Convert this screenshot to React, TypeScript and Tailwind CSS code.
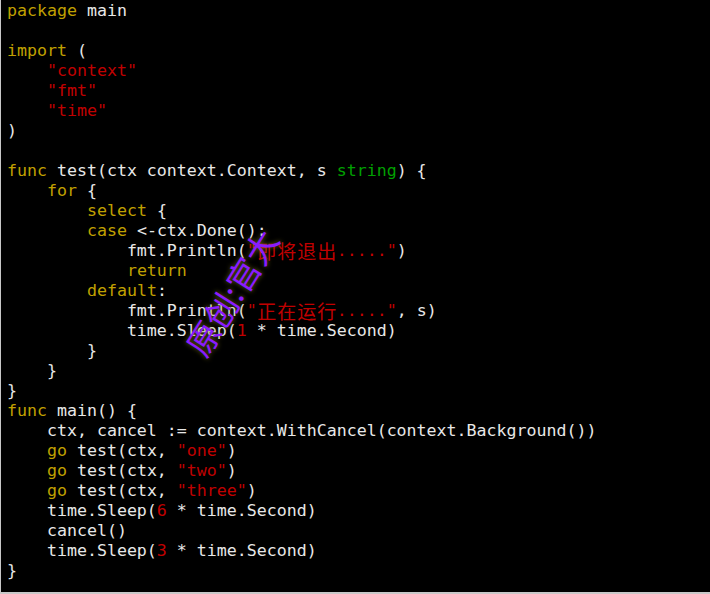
import React from "react";

type Seg = [string, string];

const K = "text-[#c0a000]";
const S = "text-[#c00000]";
const T = "text-[#00a000]";
const D = "text-[#e8e8e8]";

const lines: Seg[][] = [
  [[K, "package"], [D, " main"]],
  [],
  [[K, "import"], [D, " ("]],
  [[D, "    "], [S, '"context"']],
  [[D, "    "], [S, '"fmt"']],
  [[D, "    "], [S, '"time"']],
  [[D, ")"]],
  [],
  [[K, "func"], [D, " test(ctx context.Context, s "], [T, "string"], [D, ") {"]],
  [[D, "    "], [K, "for"], [D, " {"]],
  [[D, "        "], [K, "select"], [D, " {"]],
  [[D, "        "], [K, "case"], [D, " <-ctx.Done():"]],
  [[D, "            fmt.Println("], [S, '"即将退出....."'], [D, ")"]],
  [[D, "            "], [K, "return"]],
  [[D, "        "], [K, "default"], [D, ":"]],
  [[D, "            fmt.Println("], [S, '"正在运行....."'], [D, ", s)"]],
  [[D, "            time.Sleep("], [S, "1"], [D, " * time.Second)"]],
  [[D, "        }"]],
  [[D, "    }"]],
  [[D, "}"]],
  [[K, "func"], [D, " main() {"]],
  [[D, "    ctx, cancel := context.WithCancel(context.Background())"]],
  [[D, "    "], [K, "go"], [D, " test(ctx, "], [S, '"one"'], [D, ")"]],
  [[D, "    "], [K, "go"], [D, " test(ctx, "], [S, '"two"'], [D, ")"]],
  [[D, "    "], [K, "go"], [D, " test(ctx, "], [S, '"three"'], [D, ")"]],
  [[D, "    time.Sleep("], [S, "6"], [D, " * time.Second)"]],
  [[D, "    cancel()"]],
  [[D, "    time.Sleep("], [S, "3"], [D, " * time.Second)"]],
  [[D, "}"]],
];

function renderText(text: string) {
  const parts: React.ReactNode[] = [];
  let buf = "";
  let i = 0;
  for (const ch of text) {
    if (/[\u4e00-\u9fff]/.test(ch)) {
      if (buf) {
        parts.push(buf);
        buf = "";
      }
      parts.push(
        <span
          key={i++}
          className="inline-block w-[20px] text-center text-[19px] leading-[20px] align-top [font-family:'Noto_Sans_CJK_SC',sans-serif]"
        >
          {ch}
        </span>
      );
    } else {
      buf += ch;
    }
  }
  if (buf) parts.push(buf);
  return parts;
}

export default function App() {
  return (
    <div className="relative w-[710px] h-[594px] bg-black overflow-hidden border-l border-b-2 border-[#c8c8c8]">
      <div className="pl-[6px] pt-[1px] text-[16.6px] leading-[20px] whitespace-pre [font-family:'DejaVu_Sans_Mono',monospace]">
        {lines.map((segs, li) => (
          <div key={li} className="h-[20px]">
            {segs.map(([c, t], si) => (
              <span key={si} className={c}>
                {renderText(t)}
              </span>
            ))}
          </div>
        ))}
      </div>
      <div className="absolute left-[160px] top-[276px] -rotate-[58deg] text-[33px] leading-none text-[#8a1cff] whitespace-nowrap [font-family:'Noto_Sans_CJK_SC',sans-serif] [text-shadow:0_0_5px_rgba(150,140,30,0.75)]">
        原创:官大
      </div>
    </div>
  );
}
